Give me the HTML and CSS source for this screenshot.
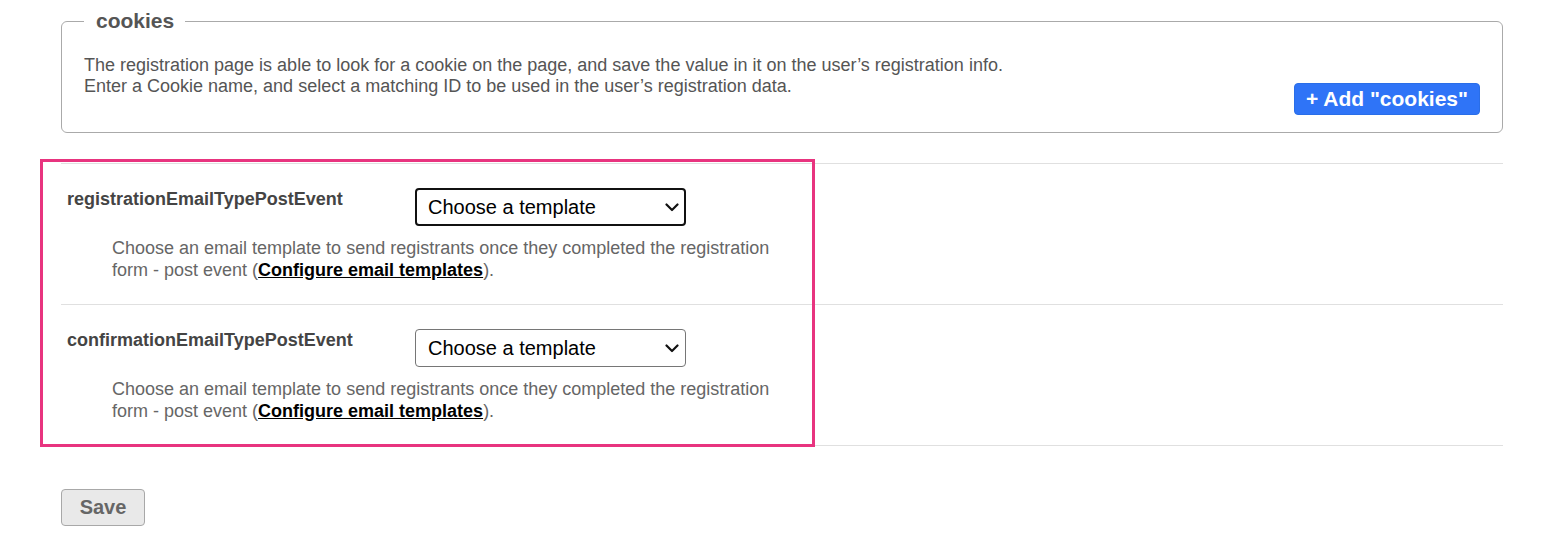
FILE: index.html
```html
<!DOCTYPE html>
<html>
<head>
<meta charset="utf-8">
<link rel="stylesheet" href="styles.css">
</head>
<body>
<div class="page">
  <fieldset class="cookies">
    <legend>cookies</legend>
    <div class="cookies-body">
      <p>The registration page is able to look for a cookie on the page, and save the value in it on the user’s registration info.<br>Enter a Cookie name, and select a matching ID to be used in the user’s registration data.</p>
      <button class="add-btn">+ Add "cookies"</button>
    </div>
  </fieldset>

  <div class="rows">
    <div class="row">
      <div class="label">registrationEmailTypePostEvent</div>
      <div class="field">
        <div class="select-wrap">
          <select class="tpl focused"><option>Choose a template</option></select>
          <svg class="chev" width="14" height="9" viewBox="0 0 14 9"><path d="M1.5 1.5 L7 7 L12.5 1.5" fill="none" stroke="#111" stroke-width="2.2" stroke-linecap="round" stroke-linejoin="round"/></svg>
        </div>
      </div>
      <p class="desc">Choose an email template to send registrants once they completed the registration form - post event (<a href="#">Configure email templates</a>).</p>
    </div>
    <div class="row">
      <div class="label">confirmationEmailTypePostEvent</div>
      <div class="field">
        <div class="select-wrap">
          <select class="tpl"><option>Choose a template</option></select>
          <svg class="chev" width="14" height="9" viewBox="0 0 14 9"><path d="M1.5 1.5 L7 7 L12.5 1.5" fill="none" stroke="#111" stroke-width="2.2" stroke-linecap="round" stroke-linejoin="round"/></svg>
        </div>
      </div>
      <p class="desc">Choose an email template to send registrants once they completed the registration form - post event (<a href="#">Configure email templates</a>).</p>
    </div>
    <div class="highlight"></div>
  </div>

  <button class="save">Save</button>
</div>
</body>
</html>
```
FILE: styles.css
```css
* { box-sizing: border-box; }
html, body { margin: 0; padding: 0; background: #fff; }
body {
  font-family: "Liberation Sans", Arial, sans-serif;
  color: #555;
}
.page {
  margin-left: 61px;
  width: 1442px;
  padding-top: 9px;
}
.cookies {
  margin: 0;
  border: 1px solid #aaa;
  border-radius: 6px;
  padding: 0 22px 17px 22px;
}
.cookies legend {
  font-size: 21px;
  font-weight: bold;
  color: #555;
  padding: 0 11px 0 12px;
  line-height: 24px;
}
.cookies-body {
  display: flex;
  align-items: flex-start;
  justify-content: space-between;
  padding-top: 22px;
}
.cookies-body p {
  margin: 0;
  font-size: 18px;
  line-height: 21px;
  color: #555;
}
.add-btn {
  margin-top: 28px;
  background: #2f74f7;
  color: #fff;
  border: 1px solid #2a6ee8;
  border-radius: 4px;
  font-family: "Liberation Sans", Arial, sans-serif;
  font-weight: bold;
  font-size: 21px;
  height: 32px;
  padding: 0 11px;
  line-height: 30px;
}
.rows {
  position: relative;
  margin-top: 30px;
  border-top: 1px solid #e0e0e0;
}
.row {
  display: grid;
  grid-template-columns: 354px 1fr;
  padding: 24px 0 23px 0;
  border-bottom: 1px solid #e0e0e0;
}
.label {
  padding-left: 6px;
  padding-top: 0;
  font-weight: bold;
  font-size: 18px;
  line-height: 22px;
  color: #444;
}
.field { display: flex; }
.select-wrap {
  position: relative;
  width: 271px;
  height: 38px;
}
.tpl {
  -webkit-appearance: none;
  appearance: none;
  width: 271px;
  height: 38px;
  font-family: "Liberation Sans", Arial, sans-serif;
  font-size: 20px;
  color: #000;
  background: #fff;
  border: 1px solid #767676;
  border-radius: 4px;
  padding: 0 30px 0 12px;
}
.tpl.focused {
  border: 2px solid #111;
  padding-left: 11px;
}
.chev {
  position: absolute;
  right: 7px;
  top: 15px;
  pointer-events: none;
}
.desc {
  grid-column: 1 / 3;
  margin: 11px 0 0 51px;
  width: 670px;
  font-size: 18px;
  line-height: 22px;
  color: #666;
}
.desc a {
  color: #000;
  font-weight: bold;
  text-decoration: underline;
}
.highlight {
  position: absolute;
  left: -21px;
  top: -5px;
  width: 775px;
  height: 288px;
  border: 3px solid #e8347f;
  pointer-events: none;
}
.save {
  margin-top: 43px;
  width: 84px;
  height: 37px;
  background: #e9e9e9;
  border: 1px solid #a8a8a8;
  border-radius: 4px;
  font-family: "Liberation Sans", Arial, sans-serif;
  font-weight: bold;
  font-size: 20px;
  color: #666;
}
```
